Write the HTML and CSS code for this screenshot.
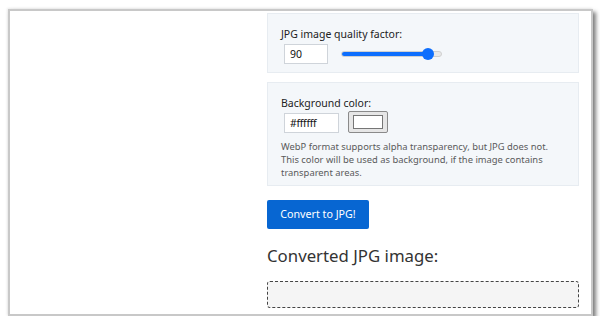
FILE: index.html
```html
<!DOCTYPE html>
<html>
<head>
<meta charset="utf-8">
<link rel="stylesheet" href="styles.css">
</head>
<body>
<div class="frame">
  <div class="col">
    <div class="panel panel-q">
      <div class="label">JPG image quality factor:</div>
      <div class="row">
        <div class="input num">90</div>
        <div class="slider">
          <div class="track"><div class="fill" style="width:86px"></div></div>
          <div class="thumb" style="left:81px"></div>
        </div>
      </div>
    </div>
    <div class="panel panel-bg">
      <div class="label">Background color:</div>
      <div class="row">
        <div class="input hex">#ffffff</div>
        <div class="swatch"><div class="swatch-in"></div></div>
      </div>
      <p class="help">WebP format supports alpha transparency, but JPG does not.<br>This color will be used as background, if the image contains<br>transparent areas.</p>
    </div>
    <div class="btn">Convert to JPG!</div>
    <h2 class="title">Converted JPG image:</h2>
    <div class="drop"></div>
  </div>
</div>
</body>
</html>
```
FILE: styles.css
```css
html, body {
  margin: 0;
  background: #ffffff;
}
body {
  padding: 9px 0 0 8px;
  font-family: "Noto Sans", "Open Sans", sans-serif;
  color: #212529;
}
.frame {
  box-sizing: border-box;
  width: 585px;
  height: 307px;
  border: 2px solid #c8c8c8;
  box-shadow: 3px 3px 4px rgba(0, 0, 0, 0.5), -1px -1px 2px rgba(0, 0, 0, 0.08);
  background: #fff;
  overflow: hidden;
}
.col {
  margin-left: 257px;
  width: 312px;
  padding-top: 2px;
}
.panel {
  box-sizing: border-box;
  background: #f4f7fa;
  border: 1px solid #e7ecf1;
  padding: 12px 13px 7px;
}
.panel-q { height: 60px; }
.panel-bg { margin-top: 9px; height: 104px; padding-bottom: 0; }
.label {
  font-size: 10.5px;
  line-height: 16px;
  color: #222;
  white-space: nowrap;
}
.row {
  display: flex;
  align-items: center;
  margin-top: 2px;
}
.input {
  box-sizing: border-box;
  margin-left: 3px;
  height: 20px;
  border: 1px solid #cfd4da;
  background: #fff;
  font-size: 10.5px;
  line-height: 18px;
  padding-left: 5px;
  color: #111;
}
.num { width: 44px; }
.hex { width: 55px; letter-spacing: -0.3px; }
.slider {
  position: relative;
  margin-left: 13px;
  width: 101px;
  height: 14px;
}
.track {
  position: absolute;
  left: 0;
  right: 0;
  top: 4px;
  height: 6px;
  border-radius: 3px;
  background: #e9e9e9;
  border: 1px solid #d0d0d0;
  box-sizing: border-box;
  overflow: hidden;
}
.fill {
  height: 100%;
  background: #0d6efd;
}
.thumb {
  position: absolute;
  top: 1px;
  width: 12px;
  height: 12px;
  border-radius: 50%;
  background: #0d6efd;
}
.swatch {
  box-sizing: border-box;
  margin-left: 9px;
  width: 40px;
  height: 22px;
  border: 1px solid #8a8a8a;
  border-radius: 2px;
  background: #e6e6e6;
  padding: 3px 4px;
  margin-top: -3px;
}
.swatch-in {
  height: 100%;
  box-sizing: border-box;
  border: 1px solid #767676;
  background: #fff;
}
.help {
  margin: 7px 0 0;
  font-size: 9.4px;
  line-height: 13px;
  color: #5a5a5a;
  white-space: nowrap;
}
.btn {
  margin-top: 14px;
  width: 102px;
  height: 29px;
  box-sizing: border-box;
  background: #0766d2;
  border-radius: 2px;
  color: #fff;
  font-size: 10.7px;
  line-height: 29px;
  text-align: center;
}
.title {
  margin: 15px 0 0;
  font-weight: 400;
  font-size: 16.8px;
  line-height: 24px;
  color: #333;
}
.drop {
  margin-top: 13px;
  box-sizing: border-box;
  height: 27px;
  border: 1px dashed #444;
  border-radius: 3px;
  background: #f5f5f5;
}
```
